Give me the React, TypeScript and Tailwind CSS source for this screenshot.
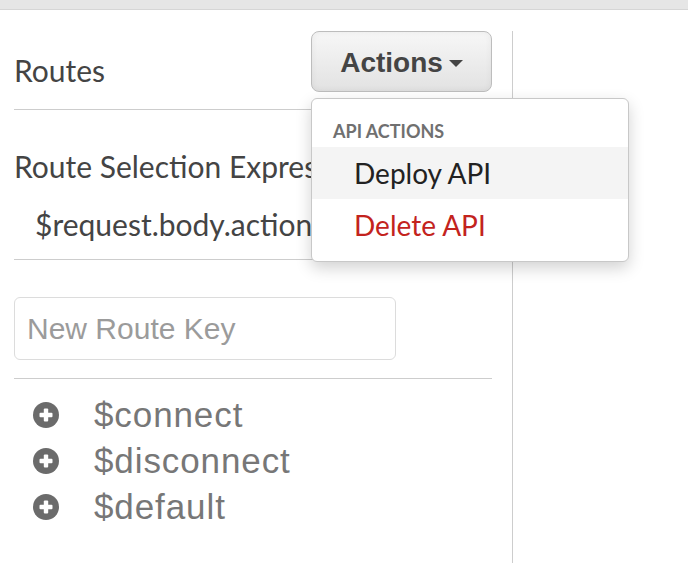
function PlusCircle() {
  return (
    <svg width="26" height="26" viewBox="0 0 26 26" className="shrink-0">
      <circle cx="13" cy="13" r="13" fill="#6b6b6b" />
      <rect x="6.5" y="10.8" width="13" height="4.4" rx="1" fill="#fff" />
      <rect x="10.8" y="6.5" width="4.4" height="13" rx="1" fill="#fff" />
    </svg>
  );
}

const routes = ["$connect", "$disconnect", "$default"];

export default function App() {
  return (
    <div className="min-h-[563px] bg-white">
      <div className="h-[10px] bg-[#e6e6e6] border-b border-[#d6d6d6]" />
      <div className="flex pt-[21px] pl-[14px] min-h-[553px]">
        <div className="w-[478px] shrink-0">
          {/* header */}
          <div className="flex justify-between h-[79px] border-b border-[#cdcdcd]">
            <div className="mt-[21px] text-[30px] leading-[36px] text-[#444] font-['Lato',sans-serif]">
              Routes
            </div>
            <div className="relative z-10">
              <button className="flex items-center justify-center gap-[6px] pt-[2px] w-[181px] h-[61px] rounded-[8px] border border-[#bdbdbd] bg-gradient-to-b from-[#f7f7f7] to-[#e2e2e2] shadow-[inset_0_0_6px_rgba(0,0,0,0.06)] text-[28px] font-bold text-[#444] font-['Liberation_Sans',Arial,sans-serif]">
                Actions
                <svg width="14" height="7" viewBox="0 0 14 7" className="mt-[2px]">
                  <path d="M0 0h14L7 7z" fill="#444" />
                </svg>
              </button>
              <div className="absolute left-0 top-[67px] w-[318px] rounded-[6px] border border-[#c8c8c8] bg-white shadow-[0_6px_16px_rgba(0,0,0,0.18)] pt-[21px] pb-[10px] font-['Lato',sans-serif]">
                <div className="pl-[21px] text-[18px] leading-[22px] font-bold text-[#707070] mb-[5px]">
                  API ACTIONS
                </div>
                <div className="h-[52px] flex items-center pl-[42px] bg-[#f4f4f4] text-[28px] text-[#222]">
                  Deploy API
                </div>
                <div className="h-[52px] flex items-center pl-[42px] text-[28px] text-[#c3231d]">
                  Delete API
                </div>
              </div>
            </div>
          </div>

          {/* route selection expression */}
          <div className="pt-[38px] pb-[17px] border-b border-[#cdcdcd] font-['Lato',sans-serif] text-[#444] whitespace-nowrap">
            <div className="text-[30px] leading-[36px]">Route Selection Expression</div>
            <div className="mt-[22px] pl-[21px] text-[30px] leading-[36px]">$request.body.action</div>
          </div>

          {/* new route key */}
          <div className="pt-[37px] pb-[18px] border-b border-[#cdcdcd]">
            <input
              placeholder="New Route Key"
              className="w-[382px] h-[63px] rounded-[6px] border border-[#dcdcdc] pl-[12px] text-[30px] text-[#444] placeholder:text-[#9b9b9b] outline-none font-['Liberation_Sans',Arial,sans-serif]"
            />
          </div>

          {/* routes list */}
          <div className="pt-[13px]">
            {routes.map((r) => (
              <div key={r} className="flex items-center h-[46px] pl-[19px] gap-[35px]">
                <PlusCircle />
                <span className="text-[35px] leading-[46px] tracking-[0.9px] text-[#777] font-['Liberation_Sans',Arial,sans-serif]">
                  {r}
                </span>
              </div>
            ))}
          </div>
        </div>
        <div className="ml-[20px] flex-1 border-l border-[#cdcdcd]" />
      </div>
    </div>
  );
}
